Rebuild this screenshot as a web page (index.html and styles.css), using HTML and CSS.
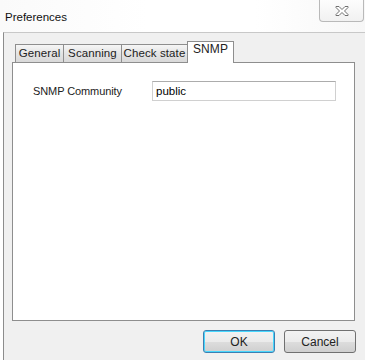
FILE: index.html
```html
<!DOCTYPE html>
<html lang="en">

<head>
  <meta charset="UTF-8">
  <title>Preferences</title>
  <link rel="stylesheet" href="styles.css">
</head>

<body>
  <div class="titlebar">
    <span class="title">Preferences</span>
    <div class="close">
      <svg width="14" height="10" viewBox="0 0 14 10">
        <path d="M1 0.5h3l3 3 3-3h3v1l-3.5 3.5 3.5 3.5v1h-3l-3-3-3 3h-3v-1l3.5-3.5-3.5-3.5z" fill="#fff" stroke="#6f6f6f" stroke-width="1" />
      </svg>
    </div>
  </div>
  <div class="dialog">
    <div class="tabs">
      <div class="tab general">General</div>
      <div class="tab scanning">Scanning</div>
      <div class="tab check">Check state</div>
      <div class="tab snmp active">SNMP</div>
    </div>
    <div class="panel">
      <div class="field">
        <label for="community">SNMP Community</label>
        <input type="text" id="community" value="public" />
      </div>
    </div>
    <div class="buttons">
      <button class="btn default">OK</button>
      <button class="btn">Cancel</button>
    </div>
  </div>
</body>

</html>
```
FILE: styles.css
```css
body {
  margin: 0;
  width: 365px;
  height: 360px;
  background: #fff;
  font-family: "Liberation Sans", sans-serif;
  font-size: 11px;
  color: #000;
  overflow: hidden;
}

.titlebar {
  height: 32px;
  display: flex;
  align-items: flex-start;
  justify-content: space-between;
  background: linear-gradient(90deg, #fafafa, #fff 40%, #fff 70%, #f7f7f7);
}

.title {
  font-size: 11.5px;
  margin: 11px 0 0 5px;
  color: #111;
}

.close {
  width: 43px;
  height: 21px;
  margin-right: 1px;
  border: 1px solid #b9b9b9;
  border-top: none;
  border-radius: 0 0 4px 4px;
  background: linear-gradient(#fdfdfd, #f1f1f1);
  display: flex;
  align-items: center;
  justify-content: center;
}

.dialog {
  height: 327px;
  margin-left: 3px;
  border-left: 1px solid #8c8c8c;
  border-top: 1px solid #c8c8c8;
  background: #f0f0f0;
  display: flex;
  flex-direction: column;
  padding: 0 8px;
}

.tabs {
  display: flex;
  align-items: flex-end;
  height: 29px;
  padding-left: 3px;
}

.tab {
  box-sizing: border-box;
  font-size: 11.5px;
  letter-spacing: 0.1px;
  height: 18px;
  line-height: 16px;
  text-align: center;
  border: 1px solid #8e8e8e;
  border-bottom: none;
  background: linear-gradient(#f6f6f6, #e4e4e4 50%, #d9d9d9);
  color: #222;
}

.tab + .tab {
  margin-left: -1px;
}

.tab.general {
  width: 49px;
}

.tab.scanning {
  width: 59px;
}

.tab.check {
  width: 67px;
}

.tab.snmp {
  width: 47px;
}

.tab.active {
  height: 22px;
  background: #fff;
  position: relative;
  top: 1px;
  line-height: 14px;
  font-size: 12px;
}

.panel {
  height: 257px;
  width: 341px;
  background: #fff;
  border: 1px solid #8e8e8e;
}

.field {
  display: flex;
  align-items: center;
  margin-top: 18px;
  padding-left: 20px;
}

.field label {
  font-size: 11px;
  letter-spacing: -0.1px;
  width: 119px;
  color: #222;
}

.field input {
  width: 176px;
  height: 16px;
  border: 1px solid #d0d0d0;
  border-top-color: #acacac;
  font-family: "Liberation Sans", sans-serif;
  font-size: 11.5px;
  padding: 1px 3px;
  margin: 0;
}

.buttons {
  display: flex;
  justify-content: flex-end;
  gap: 9px;
  margin-top: 9px;
  width: 344px;
}

.btn {
  width: 72px;
  height: 23px;
  border: 1px solid #707070;
  border-radius: 3px;
  background: linear-gradient(#f2f2f2 0%, #ebebeb 50%, #dddddd 51%, #cfcfcf 100%);
  font-family: "Liberation Sans", sans-serif;
  font-size: 12px;
  color: #222;
  padding: 0;
}

.btn.default {
  border-color: #3c7fb1;
  box-shadow: inset 0 0 0 1px #48d7fd;
}
```
